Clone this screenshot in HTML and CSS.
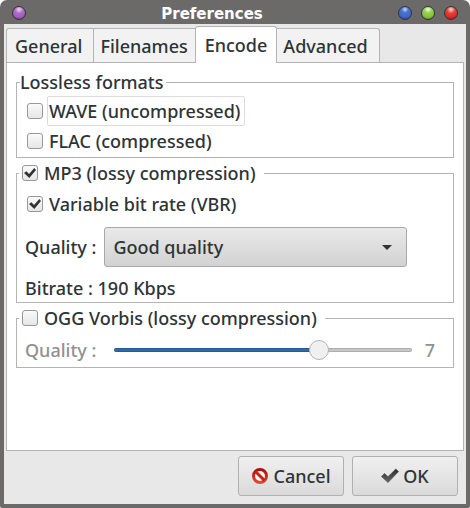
FILE: index.html
```html
<!DOCTYPE html>
<html lang="en">
<head>
  <meta charset="UTF-8">
  <meta name="viewport" content="width=device-width, initial-scale=1.0">
  <title>Preferences</title>
  <link rel="stylesheet" href="styles.css">
</head>
<body>
  <div class="window">
    <header class="titlebar">
      <button class="orb purple" aria-label="Window menu"></button>
      <h1>Preferences</h1>
      <div class="orbs">
        <button class="orb blue" aria-label="Minimize"></button>
        <button class="orb green" aria-label="Maximize"></button>
        <button class="orb red" aria-label="Close"></button>
      </div>
    </header>

    <form class="content">
      <div class="tabs" role="tablist">
        <button type="button" class="tab" role="tab">General</button>
        <button type="button" class="tab" role="tab">Filenames</button>
        <button type="button" class="tab active" role="tab" aria-selected="true">Encode</button>
        <button type="button" class="tab" role="tab">Advanced</button>
      </div>

      <div class="panel" role="tabpanel">
        <fieldset>
          <legend>Lossless formats</legend>
          <div class="row">
            <input type="checkbox" id="wave">
            <label for="wave" class="focused">WAVE (uncompressed)</label>
          </div>
          <div class="row">
            <input type="checkbox" id="flac">
            <label for="flac">FLAC (compressed)</label>
          </div>
        </fieldset>

        <fieldset>
          <legend class="check-legend">
            <input type="checkbox" id="mp3" checked>
            <label for="mp3">MP3 (lossy compression)</label>
          </legend>
          <div class="row vbr">
            <input type="checkbox" id="vbr" checked>
            <label for="vbr">Variable bit rate (VBR)</label>
          </div>
          <div class="row quality">
            <label for="mp3-quality">Quality :</label>
            <div class="combo">
              <select id="mp3-quality">
                <option>Good quality</option>
              </select>
            </div>
          </div>
          <p class="bitrate">Bitrate : 190 Kbps</p>
        </fieldset>

        <fieldset>
          <legend class="check-legend">
            <input type="checkbox" id="ogg">
            <label for="ogg">OGG Vorbis (lossy compression)</label>
          </legend>
          <div class="row slider disabled">
            <label for="ogg-quality">Quality :</label>
            <input type="range" id="ogg-quality" min="0" max="10" value="7" style="--value: 70%" disabled>
            <output for="ogg-quality">7</output>
          </div>
        </fieldset>
      </div>

      <footer class="actions">
        <button type="button" class="btn">
          <svg width="18" height="18" viewBox="0 0 18 18" aria-hidden="true">
            <defs>
              <linearGradient id="stop" x1="0" y1="0" x2="0" y2="1">
                <stop offset="0" stop-color="#a51208"/>
                <stop offset="1" stop-color="#e8452f"/>
              </linearGradient>
            </defs>
            <circle cx="9" cy="9" r="6.5" fill="#f4f4f4" stroke="url(#stop)" stroke-width="3"/>
            <path d="M4.5 4.5l9 9" stroke="#c42417" stroke-width="3"/>
          </svg>
          Cancel
        </button>
        <button type="button" class="btn">
          <svg width="18" height="18" viewBox="0 0 18 18" aria-hidden="true">
            <defs>
              <linearGradient id="tick" x1="0" y1="0" x2="0" y2="1">
                <stop offset="0" stop-color="#2c2c2c"/>
                <stop offset="1" stop-color="#686868"/>
              </linearGradient>
            </defs>
            <path d="M0.5 9.5L3.5 6.5L7 9.7L14.8 2L17.6 4.6L7 15.5Z" fill="url(#tick)" stroke="#444" stroke-width="0.6" stroke-linejoin="round"/>
          </svg>
          OK
        </button>
      </footer>
    </form>
  </div>
</body>
</html>
```
FILE: styles.css
```css
* {
  box-sizing: border-box;
}
body {
  margin: 0;
  background: #fff;
  color: #2e3436;
  font-family: "Noto Sans", "Open Sans", sans-serif;
  font-size: 18px;
  font-weight: 500;
  line-height: 26px;
}
button, select {
  font: inherit;
  color: inherit;
}
.window {
  display: flex;
  flex-direction: column;
  min-height: 100vh;
  padding: 0 4px 4px;
  background: #6b6a69;
  border-radius: 7px 7px 2px 2px;
}

/* title bar */
.titlebar {
  display: grid;
  grid-template-columns: 14px 1fr 60px;
  align-items: center;
  height: 24px;
  padding: 0 8px;
}
.titlebar h1 {
  margin: 0;
  padding-top: 2px;
  color: #fff;
  font: bold 15px/24px "DejaVu Sans", sans-serif;
  text-align: center;
}
.orbs {
  display: flex;
  gap: 9px;
}
.orb {
  width: 14px;
  height: 14px;
  padding: 0;
  border: 1px solid #333;
  border-radius: 50%;
}
.purple {
  background: radial-gradient(circle at 50% 20%, #f0d8f8 0, #b06cc8 35%, #a35fbd 65%, #6d3487 100%);
}
.blue {
  background: radial-gradient(circle at 50% 20%, #c8d8ff 0, #4a72cc 30%, #4068c4 65%, #1e3f90 100%);
}
.green {
  background: radial-gradient(circle at 50% 20%, #f0ffd8 0, #93d04c 35%, #86c440 65%, #4a8414 100%);
}
.red {
  background: radial-gradient(circle at 50% 20%, #ffd8d4 0, #e84038 35%, #dc2c28 65%, #961010 100%);
}

.content {
  display: flex;
  flex: 1;
  flex-direction: column;
  padding: 2px;
  background: #e8e8e8;
}

/* notebook */
.tabs {
  display: flex;
  align-items: flex-end;
}
.tab {
  height: 34px;
  margin: 0 0 0 -1px;
  padding: 0 7px 0 6px;
  border: 1px solid #b4b4b4;
  border-bottom: 0;
  background: #f2f2f2;
}
.tab:first-child {
  margin-left: 0;
  padding: 0 11px 0 8px;
  border-radius: 3px 0 0 0;
}
.tab:last-child {
  padding: 0 11px 0 6px;
  border-radius: 0 3px 0 0;
}
.tab.active {
  z-index: 1;
  height: 37px;
  margin-bottom: -1px;
  padding: 0 9px;
  border-radius: 3px 3px 0 0;
  background: #fff;
}
.panel {
  flex: 1;
  padding: 6px 9px;
  border: 1px solid #b4b4b4;
  background: #fff;
}

fieldset {
  min-width: 0;
  margin: 0 0 2px;
  padding: 1px 8px;
  border: 1px solid #b4b4b4;
}
legend {
  margin-left: -5px;
  padding: 0 2px 0 0;
}
.check-legend {
  display: flex;
  align-items: center;
  gap: 6px;
  margin-left: -6px;
  padding: 0 8px 0 3px;
}
.row {
  display: flex;
  align-items: center;
  gap: 4px;
  min-height: 30px;
  padding-left: 2px;
}
.row label {
  padding: 1px;
  border: 1px solid transparent;
  border-radius: 2px;
}
.row label.focused {
  padding-right: 4px;
  border-color: #dcdcdc;
}

input[type="checkbox"] {
  appearance: none;
  display: grid;
  place-items: center;
  flex: none;
  width: 16px;
  height: 16px;
  margin: 0;
  border: 1px solid #989898;
  border-radius: 3px;
  background: linear-gradient(#fafafa, #e6e6e6);
}
input[type="checkbox"]:checked::before {
  content: "";
  width: 12px;
  height: 12px;
  background: #2e3436;
  clip-path: polygon(0 50%, 20% 36%, 42% 58%, 86% 8%, 100% 24%, 44% 92%);
}

.vbr {
  padding-top: 2px;
}
.quality, .slider {
  gap: 8px;
  padding-left: 0;
}
.row.quality label, .row.slider label {
  padding: 0;
  border: 0;
}
.quality {
  margin-top: 8px;
}
.combo {
  position: relative;
  flex: 0 1 303px;
}
.combo::after {
  content: "";
  position: absolute;
  top: 18px;
  right: 15px;
  border: 5px solid transparent;
  border-top-color: #2e3436;
  border-bottom: 0;
  pointer-events: none;
}
.combo select {
  appearance: none;
  display: block;
  width: 100%;
  height: 40px;
  padding: 0 8px;
  border: 1px solid #a8a8a8;
  border-radius: 3px;
  background: linear-gradient(#e9e9e9, #d2d2d2);
}
.bitrate {
  margin: 8px 0 0;
}

.slider {
  min-height: 34px;
  padding-top: 2px;
}
.disabled {
  color: #8f9192;
}
input[type="range"] {
  appearance: none;
  flex: 1;
  min-width: 0;
  height: 20px;
  margin: 0 5px 0 10px;
  background: transparent;
}
input[type="range"]::-webkit-slider-runnable-track {
  height: 4px;
  border-radius: 2px;
  background: linear-gradient(to right, #2f69a8 var(--value), #c6c6c6 var(--value));
  box-shadow: inset 0 0 0 1px rgba(0, 0, 0, 0.12);
}
input[type="range"]::-webkit-slider-thumb {
  appearance: none;
  width: 20px;
  height: 20px;
  margin-top: -8px;
  border: 1px solid #b4b4b4;
  border-radius: 50%;
  background: #f0f0f0;
}
.slider output {
  padding-right: 10px;
}

.actions {
  display: flex;
  justify-content: flex-end;
  gap: 8px;
  padding: 5px 6px 6px 0;
}
.btn {
  display: flex;
  align-items: center;
  justify-content: center;
  gap: 4px;
  width: 106px;
  height: 40px;
  padding: 0;
  border: 1px solid #b0b0b0;
  border-radius: 3px;
  background: linear-gradient(#f0f0f0, #dadada);
}
```
